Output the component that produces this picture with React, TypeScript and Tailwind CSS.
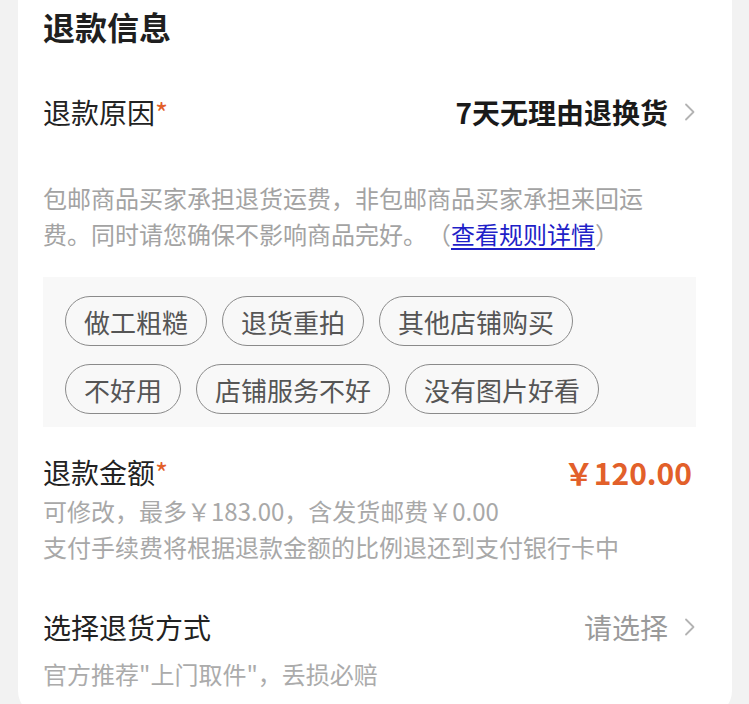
const font = { fontFamily: '"Noto Sans CJK SC", "Noto Sans", sans-serif' };

const Chevron = ({ className = "" }: { className?: string }) => (
  <svg width="12" height="18" viewBox="0 0 12 18" fill="none" className={className}>
    <path d="M2 1.5 L9.5 9 L2 16.5" stroke="#b3b3b3" strokeWidth="1.8" strokeLinecap="round" strokeLinejoin="round" />
  </svg>
);

const tags = [
  ["做工粗糙", "退货重拍", "其他店铺购买"],
  ["不好用", "店铺服务不好", "没有图片好看"],
];

export default function App() {
  return (
    <div className="h-[704px] overflow-hidden bg-[#f2f2f2] [text-spacing-trim:space-all]" style={font}>
      <div className="ml-[18px] mr-[17px] h-[715px] rounded-b-[24px] bg-white pl-[25px] pr-[36px]">
        {/* title */}
        <div className="flex h-[52px] items-center text-[32px] font-bold text-[#1f1f1f]">退款信息</div>

        {/* reason */}
        <div className="mt-[32px] flex h-[56px] items-center justify-between">
          <div className="text-[28px] text-[#222]">
            退款原因<span className="text-[#e2602a]">*</span>
          </div>
          <div className="flex items-center gap-[16px]">
            <span className="text-[28px] font-bold text-[#1a1a1a]">7天无理由退换货</span>
            <Chevron />
          </div>
        </div>

        <p className="mt-[40px] max-w-[612px] text-[24px] leading-[36px] text-[#a3a3a3]">
          包邮商品买家承担退货运费，非包邮商品买家承担来回运费。同时请您确保不影响商品完好。（<a className="text-[#1f1fc8] underline underline-offset-[4px]">查看规则详情</a>）
        </p>

        {/* tags */}
        <div className="mt-[25px] flex flex-col gap-[18px] bg-[#f8f8f8] pb-[13px] pl-[22px] pt-[19px]">
          {tags.map((row, i) => (
            <div key={i} className="flex gap-[15px]">
              {row.map((t) => (
                <span
                  key={t}
                  className="flex h-[50px] items-center rounded-full border-[1.5px] border-[#8a8a8a] px-[18px] text-[26px] text-[#555]"
                >
                  {t}
                </span>
              ))}
            </div>
          ))}
        </div>

        {/* amount */}
        <div className="mt-[24px] flex h-[42px] items-center justify-between">
          <div className="text-[28px] text-[#222]">
            退款金额<span className="text-[#e2602a]">*</span>
          </div>
          <div className="pr-[4px] text-[30px] font-semibold text-[#e2602a]">￥120.00</div>
        </div>
        <div className="text-[24px] leading-[36px] text-[#a8a8a8]">
          <div>可修改，最多￥183.00，含发货邮费￥0.00</div>
          <div>支付手续费将根据退款金额的比例退还到支付银行卡中</div>
        </div>

        {/* return method */}
        <div className="mt-[38px] flex h-[48px] items-center justify-between">
          <div className="text-[28px] text-[#222]">选择退货方式</div>
          <div className="flex items-center gap-[16px]">
            <span className="text-[28px] text-[#9a9a9a]">请选择</span>
            <Chevron />
          </div>
        </div>
        <div className="mt-[5px] text-[24px] leading-[36px] text-[#ababab]">官方推荐"上门取件"，丢损必赔</div>
      </div>
    </div>
  );
}
